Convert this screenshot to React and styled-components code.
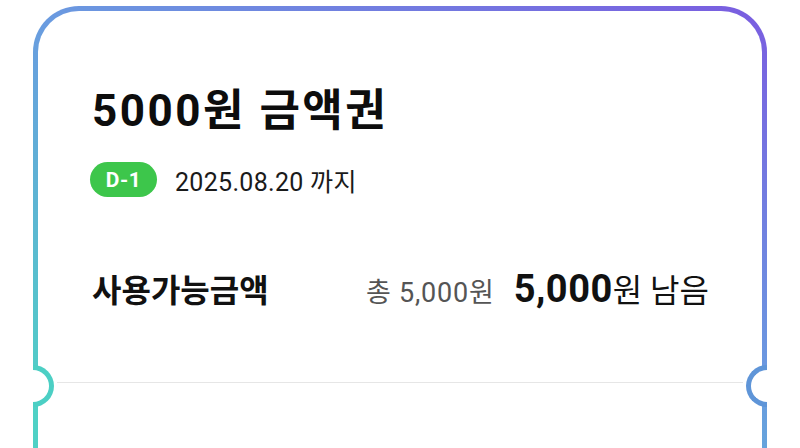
import React from "react";
import styled, { createGlobalStyle } from "styled-components";

const GlobalStyle = createGlobalStyle`
  html, body {
    margin: 0;
    padding: 0;
    background: #ffffff;
    overflow: hidden;
  }
  body {
    font-family: "Roboto", "Noto Sans CJK KR", sans-serif;
    color: #111111;
  }
`;

const Page = styled.div`
  width: 800px;
  height: 448px;
  padding-top: 6px;
  box-sizing: border-box;
  overflow: hidden;
`;

const Card = styled.div`
  position: relative;
  width: 734px;
  height: 600px;
  margin: 0 0 0 33px;
  box-sizing: border-box;
  border: 5px solid transparent;
  border-radius: 46px;
  background:
    linear-gradient(#ffffff, #ffffff) padding-box,
    linear-gradient(27deg, #4fd1c5 0%, #4fd1c5 20%, #6a9be0 61%, #7a5ce0 100%) border-box;
  padding: 74px 53px 0 54px;
`;

const Notch = styled.div`
  position: absolute;
  top: 354px;
  width: 21px;
  height: 42px;
  box-sizing: border-box;
  background: #ffffff;
  border: 5px solid ${(p) => p.color};
  ${(p) =>
    p.side === "left"
      ? `left: -5px; border-left: none; border-radius: 0 21px 21px 0;`
      : `right: -5px; border-right: none; border-radius: 21px 0 0 21px;`}
`;

const Title = styled.h1`
  margin: 0;
  font-size: 44px;
  line-height: 52px;
  font-weight: 700;
  letter-spacing: 2.5px;
  color: #0d0d0d;
`;

const MetaRow = styled.div`
  display: flex;
  align-items: center;
  gap: 18px;
  margin-top: 25px;
  height: 35px;
`;

const DayBadge = styled.span`
  display: inline-flex;
  align-items: center;
  justify-content: center;
  width: 67px;
  height: 35px;
  border-radius: 18px;
  background: #3dc64b;
  color: #ffffff;
  font-size: 21px;
  font-weight: 700;
  letter-spacing: 0.5px;
  margin-left: -2px;
`;

const Expiry = styled.span`
  font-size: 25px;
  color: #1a1a1a;
  letter-spacing: 0.3px;
`;

const AmountRow = styled.div`
  display: flex;
  align-items: center;
  justify-content: space-between;
  margin-top: 71px;
  height: 40px;
`;

const Label = styled.span`
  font-size: 32px;
  font-weight: 700;
  color: #111111;
`;

const Amounts = styled.div`
  display: flex;
  align-items: baseline;
  gap: 19px;
`;

const Total = styled.span`
  font-size: 27px;
  color: #555555;
  letter-spacing: 0.8px;
`;

const Remain = styled.span`
  font-size: 32px;
  color: #111111;
  strong {
    font-size: 38px;
    font-weight: 700;
    letter-spacing: 0.5px;
  }
`;

const Divider = styled.div`
  height: 1px;
  background: #e6e6e6;
  margin: 74px -34px 0 -35px;
`;

export default function App() {
  return (
    <>
      <GlobalStyle />
      <Page>
        <Card>
          <Title>5000원 금액권</Title>
          <MetaRow>
            <DayBadge>D-1</DayBadge>
            <Expiry>2025.08.20 까지</Expiry>
          </MetaRow>
          <AmountRow>
            <Label>사용가능금액</Label>
            <Amounts>
              <Total>총 5,000원</Total>
              <Remain>
                <strong>5,000</strong>원 남음
              </Remain>
            </Amounts>
          </AmountRow>
          <Divider />
          <Notch side="left" color="#4ccfc4" />
          <Notch side="right" color="#5f95d8" />
        </Card>
      </Page>
    </>
  );
}
